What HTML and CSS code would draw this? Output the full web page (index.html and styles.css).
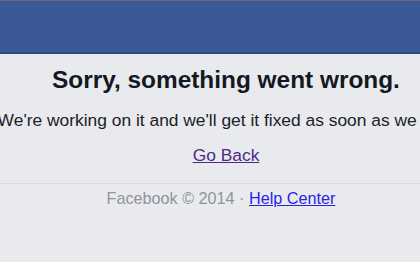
FILE: index.html
```html
<!DOCTYPE html>
<html>
<head>
<meta charset="utf-8">
<link rel="stylesheet" href="styles.css">
</head>
<body>
<div class="topbar"></div>
<main class="content">
  <h1 class="title">Sorry, something went wrong.</h1>
  <p class="message">We're working on it and we'll get it fixed as soon as we can.</p>
  <p class="back"><a href="#" class="back-link">Go Back</a></p>
</main>
<footer class="footer">
  <span class="copy">Facebook © 2014 · <a href="#" class="help">Help Center</a></span>
</footer>
</body>
</html>
```
FILE: styles.css
```css
html, body {
  margin: 0;
  padding: 0;
  overflow: hidden;
  background: #e9eaed;
  font-family: "Liberation Sans", Arial, Helvetica, sans-serif;
}
.topbar {
  height: 51px;
  background: #3b5998;
  border-top: 1px solid #6b6b6b;
  border-bottom: 2px solid #2d4a87;
}
.content {
  padding: 12px 0 17px 32px;
  border-bottom: 1px solid #d8dade;
}
.title {
  display: flex;
  justify-content: center;
  margin: 0;
  font-size: 24.4px;
  line-height: 28px;
  font-weight: bold;
  color: #141823;
  white-space: nowrap;
}
.message {
  display: flex;
  justify-content: center;
  margin: 15px 0 0;
  font-size: 17.4px;
  line-height: 22px;
  color: #1d2129;
  white-space: nowrap;
}
.back {
  display: flex;
  justify-content: center;
  margin: 13px 0 0;
  font-size: 17.4px;
  line-height: 22px;
}
.back-link {
  color: #4c2a8a;
}
.footer {
  display: flex;
  justify-content: center;
  padding: 4px 0 0 22px;
  font-size: 16.2px;
  line-height: 20px;
  color: #90949c;
  white-space: nowrap;
}
.help {
  color: #2a1fe6;
}
```
